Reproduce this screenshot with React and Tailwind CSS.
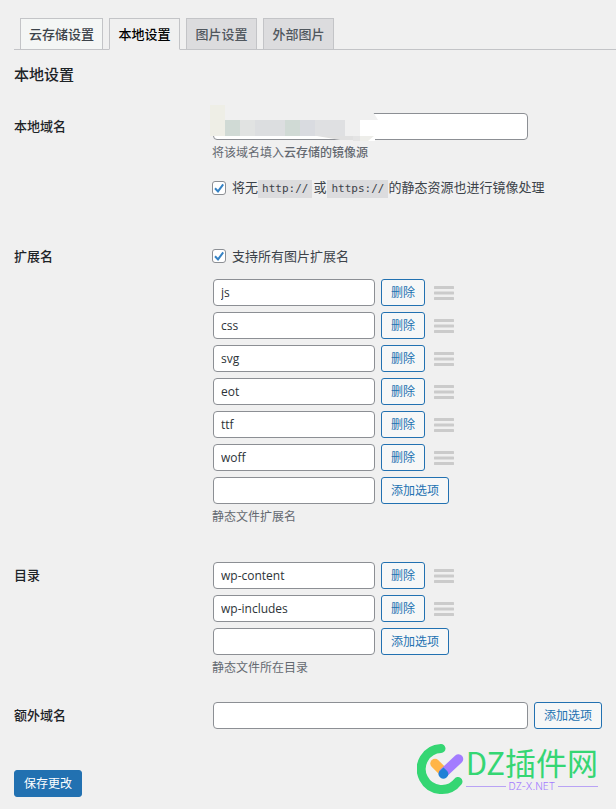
import { useState } from "react"
import clsx from "clsx"

const TABS = ["云存储设置", "本地设置", "图片设置", "外部图片"]

const tabStyles = {
  云存储设置: "bg-[#f4f6f5] text-[#3c434a]",
  本地设置: "bg-[#f0f0f0] text-black border-b-[#f0f0f0]",
}

const buttonClass =
  "shrink-0 rounded-[3px] border border-[#2271b1] bg-[#f6f7f7] px-[9px] text-[12px] leading-[25px] text-[#2271b1]"

const inputClass =
  "min-w-0 rounded-[4px] border border-[#8c8f94] bg-white px-[7px] pt-px text-[12px] leading-[24px] text-[#2c3338] outline-none"

const Tabs = () => (
  <nav className="flex gap-[6px] border-b border-[#c3c4c7] pl-[6px]">
    {TABS.map((tab) => (
      <a
        key={tab}
        href="#"
        className={clsx(
          "-mb-px min-w-[71px] border border-[#c3c4c7] px-2 text-center text-[13px] leading-[30px] font-medium",
          tabStyles[tab] || "bg-[#dcdcde] text-[#50575e]",
        )}
      >
        {tab}
      </a>
    ))}
  </nav>
)

const Section = ({ title, htmlFor, className, children }) => (
  <section className={clsx("grid grid-cols-[198px_minmax(0,1fr)]", className)}>
    <label htmlFor={htmlFor} className="text-[13px] leading-[26px] font-medium text-[#1d2327]">
      {title}
    </label>
    <div>{children}</div>
  </section>
)

const Description = ({ children }) => (
  <p className="mt-1 text-[12px] leading-[18px] text-[#646970]">{children}</p>
)

const Code = ({ children }) => (
  <code className="bg-[#dcdcde] px-1 font-['DejaVu_Sans_Mono',monospace] text-[11px] leading-[18px]">{children}</code>
)

const Checkbox = ({ children }) => (
  <label className="flex items-center gap-[6px] text-[13px] leading-[18px] text-[#3c434a]">
    <span className="relative flex h-[14px] w-[14px] shrink-0">
      <input
        type="checkbox"
        defaultChecked
        className="peer h-[14px] w-[14px] appearance-none rounded-[3px] border border-[#8c8f94] bg-white"
      />
      <svg viewBox="0 0 14 14" className="pointer-events-none absolute inset-0 hidden peer-checked:block">
        <path d="M3 7.2 6 10.4l5.2-7" fill="none" stroke="#3582c4" strokeWidth="2" />
      </svg>
    </span>
    <span className="flex items-baseline whitespace-nowrap">{children}</span>
  </label>
)

const DragHandle = () => (
  <svg width="20" height="14" viewBox="0 0 20 14" className="ml-[3px] shrink-0 cursor-move">
    <path d="M1 1.5h18M1 7h18M1 12.5h18" stroke="#cbcbcb" strokeWidth="3" strokeLinecap="round" />
  </svg>
)

const OptionList = ({ id, name, initial, className }) => {
  const [options, setOptions] = useState(initial)
  const [draft, setDraft] = useState("")

  const addOption = () => {
    if (!draft) return
    setOptions([...options, draft])
    setDraft("")
  }

  return (
    <div className={clsx("ml-px flex flex-col gap-[6px]", className)}>
      {options.map((option) => (
        <div key={option} className="flex items-center gap-[6px]">
          <input type="text" aria-label={name} defaultValue={option} className={clsx(inputClass, "w-[162px]")} />
          <button
            type="button"
            className={buttonClass}
            onClick={() => setOptions(options.filter((item) => item !== option))}
          >
            删除
          </button>
          <DragHandle />
        </div>
      ))}
      <div className="flex items-center gap-[6px]">
        <input
          id={id}
          type="text"
          value={draft}
          onChange={(e) => setDraft(e.target.value)}
          className={clsx(inputClass, "w-[162px]")}
        />
        <button type="button" className={buttonClass} onClick={addOption}>
          添加选项
        </button>
      </div>
    </div>
  )
}

// pixelated cover over the saved domain
const Mosaic = () => (
  <svg width="168" height="36" viewBox="0 0 168 36" className="pointer-events-none absolute -top-[8px] -left-[3px]">
    <path d="M0 0h15v31H0z" fill="#eeeee6" />
    <path d="M15 0h50l98 7 5 8H15z" fill="#f0f0f0" />
    <path d="M15 15h15v16H15z" fill="#d0dad5" />
    <path d="M30 15h15v16H30z" fill="#e1e3e2" />
    <path d="M45 15h30v16H45z" fill="#dcdee0" />
    <path d="M75 15h15v16H75z" fill="#d0dad5" />
    <path d="M90 15h15v16H90z" fill="#d9dbe0" />
    <path d="M105 15h30v16h-30z" fill="#dfe0e2" />
    <path d="M135 15h15v16h-15z" fill="#f0f0f0" />
    <path d="M107 31h43v4h-20z" fill="#e0e0e0" />
    <path d="M143 31h7v5h-7z" fill="#e4e4e4" />
    <path d="M150 15h15v21h-15z" fill="#fff" />
    <path d="M150 31h14l-6 5h-8z" fill="#eeeeea" />
  </svg>
)

const Logo = () => (
  <div className="flex h-[52px] gap-px">
    <svg width="48" height="52" viewBox="2 0 48 52" className="shrink-0">
      <path
        d="M26 5.5A20.5 20.5 0 1 0 43 38.5"
        fill="none"
        stroke="#35d673"
        strokeWidth="9"
        strokeLinecap="round"
      />
      <path d="M20 20.5 28.5 29" stroke="#ffb547" strokeWidth="9.5" strokeLinecap="round" />
      <path d="M28.5 30 43.5 16" stroke="#a37cff" strokeWidth="9.5" strokeLinecap="round" />
      <path d="M28.5 24.5 32.4 28.2A4.8 4.8 0 1 1 24.4 28.2z" fill="#1f80d6" />
    </svg>
    <div className="flex flex-col text-center font-['Noto_Sans_CJK_SC',sans-serif] whitespace-nowrap">
      <span className="text-[31px] leading-[38px] text-[#35d673]">DZ插件网</span>
      <span className="flex items-center gap-[3px] font-['Inter',sans-serif] text-[10px] leading-[10px] font-light text-[#a37cff]">
        <span className="h-px flex-1 bg-[#b9a3f5]" />
        DZ-X.NET
        <span className="h-px flex-1 bg-[#b9a3f5]" />
      </span>
    </div>
  </div>
)

export default function App() {
  return (
    <main className="min-h-screen bg-[#f0f0f0] pt-[18px] pb-3 pl-[14px] font-['Open_Sans','Noto_Sans_CJK_SC',sans-serif]">
      <Tabs />
      <form className="pr-[14px]" onSubmit={(e) => e.preventDefault()}>
        <h2 className="mt-[14px] text-[15px] leading-5 font-medium text-[#1d2327]">本地设置</h2>

        <Section title="本地域名" htmlFor="local-host" className="mt-[29px]">
          <div className="relative ml-px flex">
            <input id="local-host" type="text" className={clsx(inputClass, "w-[315px]")} />
            <Mosaic />
          </div>
          <Description>
            将该域名填入<strong className="font-medium">云存储的镜像源</strong>
          </Description>
          <div className="mt-4">
            <Checkbox>
              将无<Code>http://</Code>
              <span className="px-px">或</span>
              <Code>https://</Code>的静态资源也进行镜像处理
            </Checkbox>
          </div>
        </Section>

        <Section title="扩展名" htmlFor="exts" className="mt-[45px]">
          <div className="pt-1">
            <Checkbox>支持所有图片扩展名</Checkbox>
          </div>
          <OptionList
            id="exts"
            name="扩展名"
            initial={["js", "css", "svg", "eot", "ttf", "woff"]}
            className="mt-[14px]"
          />
          <Description>静态文件扩展名</Description>
        </Section>

        <Section title="目录" htmlFor="dirs" className="mt-9">
          <OptionList id="dirs" name="目录" initial={["wp-content", "wp-includes"]} />
          <Description>静态文件所在目录</Description>
        </Section>

        <Section title="额外域名" htmlFor="locals" className="mt-[25px]">
          <div className="ml-px flex gap-[6px]">
            <input id="locals" type="text" className={clsx(inputClass, "w-[315px]")} />
            <button type="button" className={buttonClass}>
              添加选项
            </button>
          </div>
        </Section>

        <div className="mt-[14px] flex items-end justify-between pr-1">
          <button
            type="submit"
            className="rounded-[3px] border border-[#2271b1] bg-[#2271b1] px-[9px] text-[12px] leading-[25px] text-white"
          >
            保存更改
          </button>
          <div className="pb-[2px]">
            <Logo />
          </div>
        </div>
      </form>
    </main>
  )
}
